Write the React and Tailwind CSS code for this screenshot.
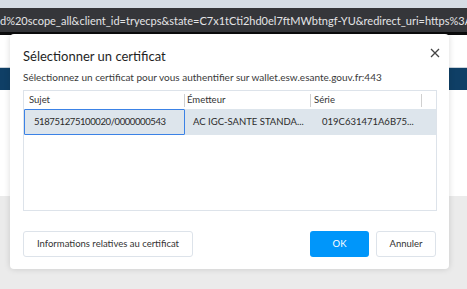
export default function App() {
  const font = { fontFamily: 'Lato, "Noto Sans", sans-serif' }
  return (
    <div className="relative w-[467px] h-[289px] overflow-hidden bg-white whitespace-nowrap" style={font}>
      {/* Browser chrome */}
      <div className="h-[8px] bg-[#d6dde5]" />
      <div className="h-[24px] bg-[#35363a] flex items-center overflow-hidden">
        <span className="text-[11px] text-[#e4e4e6] leading-none">
          d%20scope_all&amp;client_id=tryecps&amp;state=C7x1tCti2hd0el7ftMWbtngf-YU&amp;redirect_uri=https%3A%2
        </span>
      </div>
      <div className="h-[3px] bg-[#0b0b0c]" />

      {/* Page behind */}
      <div className="h-[32px] bg-white" />
      <div className="h-[1px] bg-[#c9d3dc]" />
      <div className="h-[22px] bg-[#0f3f66]" />
      <div className="h-[106px] bg-white" />
      <div className="h-[93px] bg-[#ebebeb]" />

      {/* Dialog */}
      <div className="absolute left-[10px] top-[34px] w-[439px] h-[235px] bg-white rounded-[4px] shadow-[0_0_6px_rgba(0,0,0,0.15)] px-[13px] pt-[11px]">
        <div className="flex items-start justify-between">
          <div className="text-[13px] text-[#1f1f1f] leading-[18px] pt-[2px]">Sélectionner un certificat</div>
          <svg width="10" height="10" viewBox="0 0 10 10" className="mt-[3px] mr-[-4px]">
            <path d="M1 1 L9 9 M9 1 L1 9" stroke="#444" strokeWidth="1.3" />
          </svg>
        </div>
        <div className="mt-[6px] text-[10px] text-[#3a3a3a] leading-[13px]">
          Sélectionnez un certificat pour vous authentifier sur wallet.esw.esante.gouv.fr:443
        </div>

        {/* Table */}
        <div className="mt-[6px] w-[414px] h-[121px] border border-[#dde3ea] text-[9.5px] text-[#333]">
          <div className="flex h-[18px] items-center">
            <div className="w-[161px] pl-[5px] flex items-center justify-between">
              <span>Sujet</span>
              <span className="w-px h-[13px] bg-[#d0d0d0]" />
            </div>
            <div className="w-[126px] pl-[2px] flex items-center justify-between">
              <span>Émetteur</span>
              <span className="w-px h-[13px] bg-[#d0d0d0]" />
            </div>
            <div className="w-[111px] pl-[3px] flex items-center justify-between">
              <span>Série</span>
              <span className="w-px h-[13px] bg-[#d0d0d0]" />
            </div>
          </div>
          <div className="flex h-[26px] bg-[#dde5ec] text-[#2a2a2a]">
            <div className="w-[161px] border border-[#3b82e6] rounded-[1px] flex items-center pl-[9px] tracking-[-0.4px]">
              518751275100020/0000000543
            </div>
            <div className="w-[126px] flex items-center pl-[8px]">AC IGC-SANTE STANDA...</div>
            <div className="w-[111px] flex items-center pl-[11px]">019C631471A6B75...</div>
          </div>
        </div>

        {/* Buttons */}
        <div className="mt-[20px] flex items-center text-[9.5px]">
          <div className="w-[170px] h-[26px] border border-[#dde3ea] rounded-[3px] flex items-center justify-center text-[#333]">
            Informations relatives au certificat
          </div>
          <div className="ml-auto w-[59px] h-[26px] rounded-[3px] bg-[#0096fa] text-white flex items-center justify-center">
            OK
          </div>
          <div className="ml-[7px] w-[60px] h-[26px] border border-[#dde3ea] rounded-[3px] flex items-center justify-center text-[#333]">
            Annuler
          </div>
        </div>
      </div>
    </div>
  )
}
